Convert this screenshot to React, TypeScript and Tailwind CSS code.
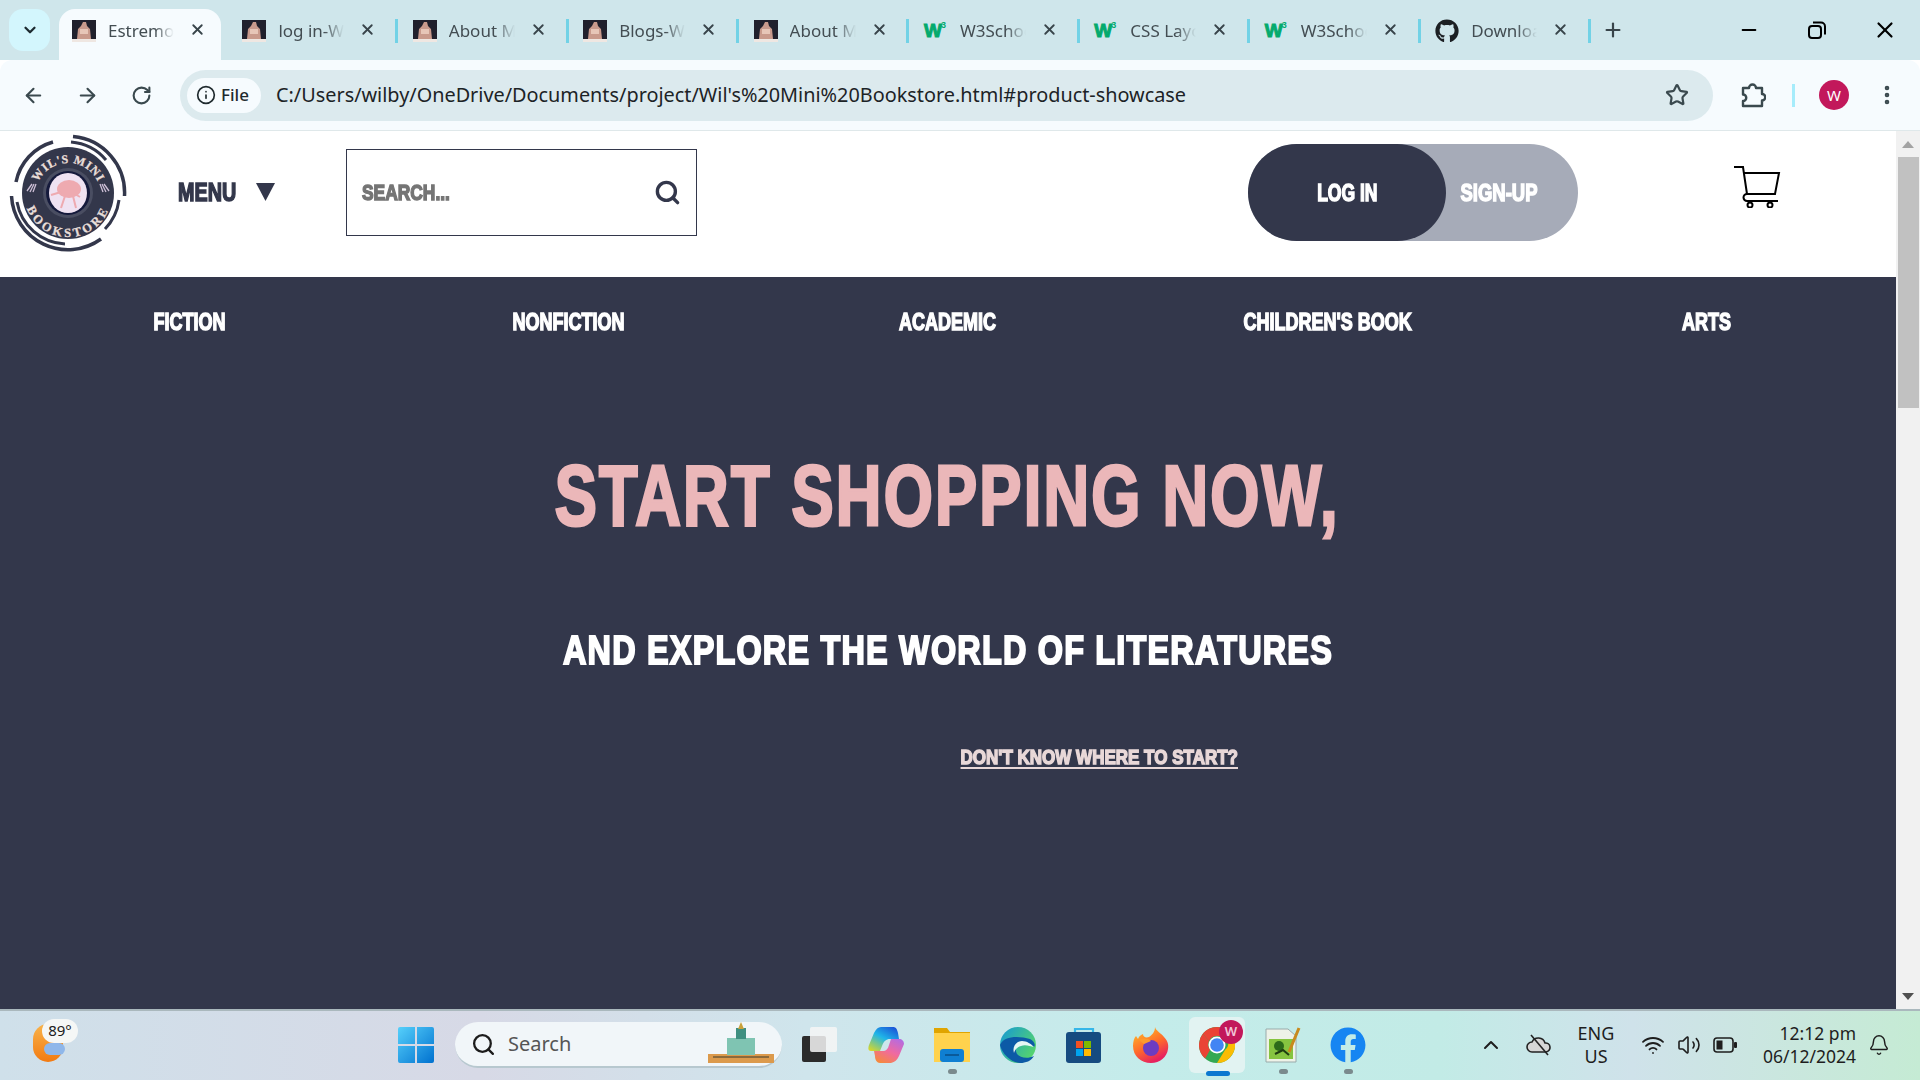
import React from "react";
import { ArrowLeft, ArrowRight, RotateCw, Info, Star, X, Plus, Minus, ChevronDown, ChevronUp, Search, Bell, Wifi, Volume2, EllipsisVertical } from "lucide-react";
import { FaGithub, FaFacebook } from "react-icons/fa";

const ui = "font-['Noto_Sans','Open_Sans',sans-serif]";
const base = "font-['Liberation_Sans',sans-serif] font-bold whitespace-nowrap";
const display = `${base} [-webkit-text-stroke:1.5px_currentColor]`;
const ink = "#33374b";

function Portrait() {
  return (
    <svg width="24" height="22" viewBox="0 0 24 22" className="shrink-0">
      <rect width="24" height="22" fill="#20202c" />
      <path d="M11 2 L14 2 L15 6 L18 9 L19 19 L5 19 L6 9 L9 6 Z" fill="#c99a8c" />
      <rect x="8" y="9" width="8" height="5" fill="#e7c6b8" />
      <rect y="19" width="24" height="3" fill="#efe7e2" />
    </svg>
  );
}

function W3() {
  return (
    <span className="flex w-[24px] shrink-0 items-start font-['Liberation_Sans',sans-serif] font-black text-[#04aa6d]">
      <span className="text-[19px] leading-[24px] [-webkit-text-stroke:1px_#04aa6d]">W</span>
      <span className="-ml-[1px] text-[9px] leading-[12px]">3</span>
    </span>
  );
}

const tabs: { title: string; icon: "p" | "w" | "g"; active?: boolean }[] = [
  { title: "Estremo", icon: "p", active: true },
  { title: "log in-Wil", icon: "p" },
  { title: "About Me", icon: "p" },
  { title: "Blogs-Wil", icon: "p" },
  { title: "About Me", icon: "p" },
  { title: "W3Schools", icon: "w" },
  { title: "CSS Layout", icon: "w" },
  { title: "W3Schools", icon: "w" },
  { title: "Download", icon: "g" },
];

function Tab({ title, icon, active }: { title: string; icon: string; active?: boolean }) {
  return (
    <div className={`flex h-[51px] w-[162.4px] shrink-0 items-center pb-[8px] pl-[13px] ${active ? "rounded-t-[16px] bg-[#f6fbfe]" : ""}`}>
      {icon === "p" && <Portrait />}
      {icon === "w" && <W3 />}
      {icon === "g" && <FaGithub className="shrink-0 text-[#1b1f23]" size={24} />}
      <span className={`ml-[12px] w-[66px] overflow-hidden whitespace-nowrap text-[17px] leading-[24px] text-[#434d52] ${ui} [mask-image:linear-gradient(90deg,#000_70%,transparent_100%)]`}>{title}</span>
      <X className="ml-[15px] -mt-[2px] shrink-0 text-[#38444a]" size={17} strokeWidth={2.6} />
    </div>
  );
}

function TabStrip() {
  return (
    <div className="flex h-[60px] shrink-0 items-end bg-[#cfe6eb] pl-[9px]">
      <div className="mb-[9px] flex h-[42px] w-[41px] shrink-0 items-center justify-center rounded-[14px] bg-[#d3f6fd]">
        <ChevronDown size={18} strokeWidth={3} className="text-[#1d2a30]" />
      </div>
      <div className="ml-[9px] flex items-end">
        {tabs.map((t, i) => (
          <React.Fragment key={i}>
            <Tab {...t} />
            <div className="flex h-[51px] w-[8px] shrink-0 items-start justify-center pt-[10px]">
              {i > 0 && <div className="ml-[2px] h-[24px] w-[3px] shrink-0 bg-[#72d2e6]" />}
            </div>
          </React.Fragment>
        ))}
      </div>
      <div className="ml-[2px] flex h-[51px] w-[36px] shrink-0 items-start justify-center pt-[10px]">
        <Plus size={22} strokeWidth={2.4} className="text-[#38444a]" />
      </div>
      <div className="ml-auto flex h-[60px] items-center pr-[22px]">
        <Minus size={22} strokeWidth={2} className="text-black" />
        <svg width="20" height="20" viewBox="0 0 20 20" fill="none" stroke="black" strokeWidth="2" className="ml-[47px]">
          <rect x="2" y="6" width="12" height="12" rx="3" />
          <path d="M6 2.5h8a4 4 0 0 1 4 4v8" />
        </svg>
        <X size={26} strokeWidth={2} className="ml-[45px] text-black" />
      </div>
    </div>
  );
}

function Toolbar() {
  return (
    <div className="flex h-[71px] shrink-0 items-center rounded-t-[12px] border-b border-[#dfe8ea] bg-[#f6fbfe] pl-[22px]">
      <ArrowLeft size={23} strokeWidth={2.2} className="text-[#3a494e]" />
      <ArrowRight size={23} strokeWidth={2.2} className="ml-[31px] text-[#3a494e]" />
      <RotateCw size={21} strokeWidth={2.4} className="ml-[32px] text-[#3a494e]" />
      <div className="ml-[28px] flex h-[51px] w-[1533px] items-center rounded-full bg-[#dceaee] pl-[7px]">
        <div className={`flex h-[35px] w-[74px] items-center justify-center gap-[5px] rounded-full bg-[#f6fbfe] pr-[3px] text-[17px] font-medium text-[#1f2a2e] ${ui}`}>
          <Info size={20} strokeWidth={2} />
          <span>File</span>
        </div>
        <span className={`ml-[15px] whitespace-nowrap text-[19.85px] text-[#1c2326] ${ui}`}>C:/Users/wilby/OneDrive/Documents/project/Wil's%20Mini%20Bookstore.html#product-showcase</span>
        <Star size={24} strokeWidth={2.2} className="ml-auto mr-[24px] text-[#3a494e]" />
      </div>
      <svg width="26" height="26" viewBox="0 0 26 26" fill="none" stroke="#3a494e" strokeWidth="2.4" className="ml-[27px]">
        <path d="M3 6h6a3.5 3.5 0 0 1 7 0h6v6a3.2 3.2 0 0 1 0 6.5V24H3v-5a3.2 3.2 0 0 0 0-6.5Z" strokeLinejoin="round" />
      </svg>
      <div className="ml-[26px] h-[23px] w-[3px] bg-[#a6ecfb]" />
      <div className={`ml-[24px] flex h-[30px] w-[30px] items-center justify-center rounded-full bg-[#c2185b] text-[15px] text-white ${ui}`}>W</div>
      <EllipsisVertical size={24} strokeWidth={2.6} className="ml-[26px] text-[#3a494e]" />
    </div>
  );
}

function Logo() {
  return (
    <svg width="118" height="118" viewBox="0 0 118 118" className="shrink-0">
      <defs>
        <path id="top" d="M 26 62 A 33 33 0 1 1 92 62" />
        <path id="bot" d="M 15 59 A 44 44 0 0 0 103 59" />
      </defs>
      <g fill="none" stroke={ink} strokeLinecap="butt">
        <path d="M 64 2.500 A 56.500 56.500 0 0 1 115.500 62" strokeWidth="3.500" />
        <path d="M 62 8 A 51 51 0 0 1 97 26" strokeWidth="3" />
        <path d="M 2.500 62 A 56.500 56.500 0 0 0 92 105" strokeWidth="3.500" />
        <path d="M 8 68 A 51 51 0 0 0 56 110" strokeWidth="3" />
        <path d="M 7 48 A 52 52 0 0 1 44 8" strokeWidth="3.500" />
        <path d="M 110 66 A 52 52 0 0 1 96 95" strokeWidth="3" />
      </g>
      <circle cx="59" cy="59" r="46" fill={ink} />
      <text fill="#e9ded8" fontFamily="'Liberation Serif',serif" fontWeight="700" fontSize="12" letterSpacing="0.800" stroke="#e9ded8" strokeWidth="0.300"><textPath href="#top" startOffset="50%" textAnchor="middle">WIL'S MINI</textPath></text>
      <text fill="#e9ded8" fontFamily="'Liberation Serif',serif" fontWeight="700" fontSize="12.500" letterSpacing="3" stroke="#e9ded8" strokeWidth="0.300"><textPath href="#bot" startOffset="50%" textAnchor="middle">BOOKSTORE</textPath></text>
      <g stroke="#cdbfd6" strokeWidth="1.300"><path d="M18 57l5-7M21 58l4-8M24 58l3-8M100 57l-5-7M97 58l-4-8M94 58l-3-8" /></g>
      <circle cx="59" cy="59" r="25" fill="#4a4e62" />
      <circle cx="59" cy="59" r="22" fill="#151a3c" />
      <ellipse cx="59" cy="59" rx="19" ry="20" fill="#efe2f2" />
      <ellipse cx="60" cy="55" rx="12" ry="9" fill="#eeaab0" />
      <path d="M52 58l-10 3M66 60l5 3M56 62l-4 12M64 62l3 12" stroke="#eeaab0" strokeWidth="2" fill="none" />
    </svg>
  );
}

function Cart() {
  return (
    <svg width="48" height="42" viewBox="0 0 48 42" fill="none" stroke="#000" strokeWidth="2" className="shrink-0">
      <path d="M1 1h9l4 27" />
      <path d="M10 7h36l-4 21H14" />
      <path d="M14 28a3 3 0 0 0 0 7h31" />
      <circle cx="17" cy="39" r="2.500" />
      <circle cx="37" cy="39" r="2.500" />
    </svg>
  );
}

function Header() {
  return (
    <div className="flex h-[146px] shrink-0 items-start bg-white pl-[9px]">
      <div className="pt-[3px]"><Logo /></div>
      <div className="ml-[51px] mt-[46px] flex items-center text-[#33374b]">
        <span className={`inline-block w-[58px] origin-left scale-x-[0.79] text-[25px] leading-[30px] ${display}`}>MENU</span>
        <svg width="19" height="18" viewBox="0 0 19 18" className="ml-[20px]"><path d="M0 0h19L9.500 18Z" fill={ink} /></svg>
      </div>
      <div className="ml-[71px] mt-[18px] flex h-[87px] w-[351px] items-center border border-[#33374b] px-[15px]">
        <span className={`inline-block w-[88px] origin-left scale-x-[0.79] text-[22px] leading-[28px] text-[#757575] ${display}`}>SEARCH...</span>
        <Search size={27} strokeWidth={3} className="ml-auto text-[#33374b]" />
      </div>
      <div className="ml-[551px] mt-[13px] flex h-[97px] w-[330px] rounded-[49px] bg-[#a6abb8]">
        <div className="flex w-[198px] items-center justify-center rounded-[49px] bg-[#33374b] pl-[1px] text-white">
          <span className={`inline-block scale-x-[0.73] text-[24px] ${display}`}>LOG IN</span>
        </div>
        <div className="flex w-[132px] items-center justify-center pr-[25px] text-white">
          <span className={`inline-block scale-x-[0.77] text-[24px] ${display}`}>SIGN-UP</span>
        </div>
      </div>
      <div className="ml-[155px] mt-[35px]"><Cart /></div>
    </div>
  );
}

function Hero() {
  return (
    <div className="flex flex-1 flex-col bg-[#33374b]">
      <div className="grid h-[90px] grid-cols-5 items-center text-center text-[24px] text-white">
        {["FICTION", "NONFICTION", "ACADEMIC", "CHILDREN'S BOOK", "ARTS"].map((t) => (
          <span key={t} className={`block scale-x-[0.75] ${display}`}>{t}</span>
        ))}
      </div>
      <h1 className={`mt-[79px] scale-x-[0.743] pr-[2px] text-center text-[85px] leading-[100px] tracking-[3px] text-[#ebb7b9] ${base} [-webkit-text-stroke:3px_#ebb7b9]`}>START SHOPPING NOW,</h1>
      <h2 className={`mt-[79px] scale-x-[0.791] text-center text-[41px] leading-[50px] tracking-[1.500px] text-white ${base} [-webkit-text-stroke:2px_#ffffff]`}>AND EXPLORE THE WORLD OF LITERATURES</h2>
      <div className="mt-[69px] flex justify-center pl-[303px]">
        <span className={`inline-block scale-x-[0.81] text-[21px] leading-[26px] text-[#e9d8d8] underline underline-offset-[3px] ${display}`}>DON'T KNOW WHERE TO START?</span>
      </div>
    </div>
  );
}

function Scrollbar() {
  return (
    <div className="flex w-[24px] shrink-0 flex-col items-center bg-[#f1f1f1]">
      <div className="flex h-[26px] items-center"><svg width="12" height="7" viewBox="0 0 12 7"><path d="M6 0l6 7H0Z" fill="#a3a3a3" /></svg></div>
      <div className="h-[251px] w-[21px] bg-[#c1c1c1]" />
      <div className="mt-auto flex h-[26px] items-center"><svg width="12" height="7" viewBox="0 0 12 7"><path d="M6 7l6-7H0Z" fill="#505050" /></svg></div>
    </div>
  );
}

function Weather() {
  return (
    <div className="relative h-[52px] w-[46px] shrink-0">
      <div className="absolute bottom-[9px] left-[0px] h-[38px] w-[30px] rounded-full bg-[linear-gradient(180deg,#f9b34a,#f27a12)]" />
      <div className="absolute bottom-[16px] left-[11px] h-[12px] w-[21px] rounded-full bg-[#8fb7ea]" />
      <div className={`absolute left-[9px] top-0 flex h-[24px] w-[36px] items-center justify-center rounded-full bg-[#f5f7f6] text-[15px] text-[#202020] ${ui}`}>89°</div>
    </div>
  );
}

function WinLogo() {
  return (
    <svg width="36" height="36" viewBox="0 0 36 36">
      <defs>
        <linearGradient id="wl" x1="0" y1="0" x2="1" y2="1"><stop offset="0" stopColor="#56d0fb" /><stop offset="1" stopColor="#0071cf" /></linearGradient>
      </defs>
      <path d="M0 2a2 2 0 0 1 2-2h15v17H0ZM19 0h15a2 2 0 0 1 2 2v15H19ZM0 19h17v17H2a2 2 0 0 1-2-2ZM19 19h17v15a2 2 0 0 1-2 2H19Z" fill="url(#wl)" />
    </svg>
  );
}

function TaskSearch() {
  return (
    <div className={`flex h-[46px] w-[327px] shrink-0 items-center rounded-full border-b-2 border-[#b7c8cf] bg-[#f1f6f9] pl-[16px] ${ui}`}>
      <Search size={25} strokeWidth={2.2} className="text-[#1c1c1c]" />
      <span className="ml-[12px] text-[20px] text-[#555]">Search</span>
      <svg width="72" height="44" viewBox="0 0 72 44" className="ml-auto mr-[5px]">
        <rect x="3" y="32" width="66" height="9" fill="#dc9a4c" />
        <rect x="22" y="16" width="28" height="17" fill="#7fc4b2" />
        <rect x="31" y="6" width="10" height="11" fill="#3f8f80" />
        <path d="M36 0l3 7h-6Z" fill="#c9a13b" />
        <rect x="8" y="34" width="56" height="2" fill="#8b6a3c" />
      </svg>
    </div>
  );
}

function TaskView() {
  return (
    <svg width="36" height="36" viewBox="0 0 36 36">
      <rect x="0" y="9" width="24" height="26" rx="2" fill="#2b2b2b" />
      <rect x="8" y="0" width="27" height="25" rx="2" fill="#f6f6f6" fillOpacity="0.85" />
    </svg>
  );
}
function Copilot() {
  return (
    <svg width="36" height="36" viewBox="0 0 36 36">
      <defs>
        <linearGradient id="c1" x1="0.8" y1="0" x2="0.1" y2="1"><stop offset="0" stopColor="#1c57d8" /><stop offset="0.45" stopColor="#1fb6e8" /><stop offset="1" stopColor="#d8d72a" /></linearGradient>
        <linearGradient id="c2" x1="0.8" y1="0" x2="0.2" y2="1"><stop offset="0" stopColor="#b56be0" /><stop offset="0.5" stopColor="#f06aa0" /><stop offset="1" stopColor="#f58a3a" /></linearGradient>
      </defs>
      <path d="M13 0h12c3 0 4 2 5 6l1 6H22c-4 0-6 2-8 7l-2 5H3c-3 0-3-3-2-6l5-12c2-4 4-6 7-6Z" fill="url(#c1)" />
      <path d="M23 12h8c3 0 5 2 5 5l-5 12c-2 4-4 6-8 7H12c-3 0-5-3-5-7l-1-5h9c3 0 5-2 6-6Z" fill="url(#c2)" />
    </svg>
  );
}
function Folder() {
  return (
    <svg width="36" height="36" viewBox="0 0 36 36">
      <path d="M0 1h13l3 4h20v30H0Z" fill="#e0a400" />
      <rect y="6" width="36" height="29" fill="#ffd24d" />
      <rect x="6" y="22" width="24" height="13" rx="3" fill="#0f7fd2" />
      <rect x="11" y="27" width="14" height="2" fill="#0a5a9a" />
    </svg>
  );
}
function Edge() {
  return (
    <svg width="36" height="36" viewBox="0 0 36 36">
      <defs>
        <linearGradient id="e1" x1="0" y1="0" x2="1" y2="0.6"><stop offset="0" stopColor="#1498d6" /><stop offset="1" stopColor="#54d36f" /></linearGradient>
      </defs>
      <circle cx="18" cy="18" r="18" fill="url(#e1)" />
      <path d="M0 18C2 27 12 36 20 36c6 0 11-2 14-7-6 3-14 2-17-2-3-5 0-10 4-11 5-1 9 1 13 4 2-2 0-6-4-8C20 9 4 8 0 18Z" fill="#0c5aa6" />
      <path d="M14 26c-2-6 2-12 8-12 5 0 9 3 12 6-4-1-9-3-13-1-4 1-6 4-7 7Z" fill="#e6f7f3" />
    </svg>
  );
}
function Store() {
  return (
    <svg width="36" height="36" viewBox="0 0 36 36">
      <path d="M9 6V2h18v4" fill="none" stroke="#36b6e8" strokeWidth="2.200" />
      <rect y="5" width="35" height="31" rx="3" fill="#164b80" />
      <rect x="10" y="14" width="7" height="7" fill="#f25022" />
      <rect x="18" y="14" width="7" height="7" fill="#7fba00" />
      <rect x="10" y="22" width="7" height="7" fill="#00a4ef" />
      <rect x="18" y="22" width="7" height="7" fill="#ffb900" />
    </svg>
  );
}
function Firefox() {
  return (
    <svg width="36" height="36" viewBox="0 0 36 36">
      <defs>
        <linearGradient id="f1" x1="0" y1="0" x2="0.5" y2="1"><stop offset="0" stopColor="#ffc928" /><stop offset="0.6" stopColor="#ff6a2b" /><stop offset="1" stopColor="#e6225f" /></linearGradient>
      </defs>
      <path d="M22 0c1 4 6 6 9 10 3 3 5 7 4 12-1 8-8 14-17 14C8 36 0 29 0 19c0-4 1-8 3-10l2 3c1-3 3-4 5-5 0 3 3 4 6 3 3-2 6-5 6-10Z" fill="url(#f1)" />
      <circle cx="18" cy="21" r="8" fill="#6d3cc0" />
      <path d="M6 13c4-2 9-2 12 1l-7 3Z" fill="#ff9a2b" />
    </svg>
  );
}
function Chrome() {
  return (
    <div className="relative flex h-[56px] w-[56px] shrink-0 items-center justify-center rounded-[6px] bg-[#e2f3f2]">
      <svg width="36" height="36" viewBox="0 0 36 36">
        <circle cx="18" cy="18" r="18" fill="#34a853" />
        <path d="M18 0a18 18 0 0 1 15.600 9H18a9 9 0 0 0-8 5L3.800 6.800A18 18 0 0 1 18 0Z" fill="#ea4335" />
        <path d="M3.800 6.800 10 14a9 9 0 0 0 1 9l-4.800 8.500A18 18 0 0 1 3.800 6.800Z" fill="#ea4335" />
        <path d="M33.600 9A18 18 0 0 1 18 36l8-13a9 9 0 0 0 0-14Z" fill="#fbbc04" />
        <circle cx="18" cy="18" r="8.500" fill="#fff" />
        <circle cx="18" cy="18" r="6.800" fill="#4285f4" />
      </svg>
      <div className={`absolute right-[2px] top-[3px] flex h-[24px] w-[24px] items-center justify-center rounded-full bg-[#c2185b] text-[13px] font-semibold text-[#f1c6d8] ${ui}`}>W</div>
    </div>
  );
}
function Notepad() {
  return (
    <svg width="36" height="38" viewBox="0 0 36 38">
      <path d="M1 3h22l8 7v26H1Z" fill="#eef2e8" stroke="#9aa" strokeWidth="1" />
      <rect x="4" y="13" width="24" height="20" fill="#86c440" />
      <circle cx="14" cy="20" r="5" fill="#2c6a1a" />
      <path d="M10 28l8-4 6 5" stroke="#1f3d10" strokeWidth="2" fill="none" />
      <path d="M24 26 L34 2" stroke="#c88a1d" strokeWidth="3" />
    </svg>
  );
}

function Tray() {
  return (
    <div className={`ml-auto flex items-center pr-[30px] text-[#1e1e1e] ${ui}`}>
      <ChevronUp size={24} strokeWidth={2} />
      <svg width="26" height="22" viewBox="0 0 26 22" fill="none" stroke="#222" strokeWidth="1.600" className="ml-[23px]">
        <path d="M6 18a5 5 0 0 1 0-10 7 7 0 0 1 13 1 4.500 4.500 0 0 1 1 9Z" fill="#d6d6d6" />
        <path d="M5 1l17 20" />
      </svg>
      <div className="ml-[12px] flex w-[64px] flex-col items-center text-[18px] leading-[23px]"><span>ENG</span><span>US</span></div>
      <Wifi size={24} strokeWidth={1.800} className="ml-[13px]" />
      <Volume2 size={24} strokeWidth={1.600} className="ml-[12px]" />
      <svg width="24" height="16" viewBox="0 0 24 16" fill="none" className="ml-[12px]">
        <rect x="1" y="1" width="19" height="14" rx="3" stroke="#1e1e1e" strokeWidth="1.600" />
        <rect x="3.500" y="3.500" width="6" height="9" fill="#1e1e1e" />
        <rect x="21" y="5" width="3" height="6" rx="1" fill="#1e1e1e" />
      </svg>
      <div className="ml-[14px] flex w-[105px] flex-col items-end text-[17.500px] leading-[23px]"><span>12:12 pm</span><span>06/12/2024</span></div>
      <Bell size={22} strokeWidth={1.600} className="ml-[12px]" />
    </div>
  );
}

function Dot({ color = "#7a8a8d", w = "w-[9px]" }: { color?: string; w?: string }) {
  return <div className={`h-[5px] ${w} rounded-full`} style={{ background: color }} />;
}

function Slot({ children, dot, className = "" }: { children: React.ReactNode; dot?: boolean; className?: string }) {
  return (
    <div className={`relative flex h-[36px] w-[36px] shrink-0 items-center justify-center ${className}`}>
      {children}
      {dot && <div className="absolute -bottom-[11px] left-[14px]"><Dot /></div>}
    </div>
  );
}

function Taskbar() {
  return (
    <div className="flex h-[71px] shrink-0 items-center border-t-2 border-[#aab8bd] bg-[linear-gradient(90deg,#cfe0ea_0%,#d7d9e6_25%,#cfe5ec_42%,#c4ecea_60%,#c2ebe6_75%,#cfe2ea_85%,#c5ebd4_100%)] pb-[2px] pl-[33px]">
      <Weather />
      <div className="ml-[319px]"><Slot><WinLogo /></Slot></div>
      <div className="ml-[21px] pt-[1px]"><TaskSearch /></div>
      <Slot className="ml-[20px]"><TaskView /></Slot>
      <Slot className="ml-[30px]"><Copilot /></Slot>
      <Slot className="ml-[30px]" dot><Folder /></Slot>
      <Slot className="ml-[30px]"><Edge /></Slot>
      <Slot className="ml-[30px]"><Store /></Slot>
      <Slot className="ml-[31px]"><Firefox /></Slot>
      <div className="relative ml-[20px]">
        <Chrome />
        <div className="absolute -bottom-[3px] left-[17px]"><Dot color="#0b78d0" w="w-[24px]" /></div>
      </div>
      <Slot className="ml-[20px]" dot><Notepad /></Slot>
      <Slot className="ml-[29px]" dot><FaFacebook size={36} className="text-[#1685f2]" /></Slot>
      <Tray />
    </div>
  );
}

export default function App() {
  return (
    <div className="flex h-[1080px] w-[1920px] flex-col overflow-hidden">
      <TabStrip />
      <Toolbar />
      <div className="flex min-h-0 flex-1">
        <div className="flex min-w-0 flex-1 flex-col">
          <Header />
          <Hero />
        </div>
        <Scrollbar />
      </div>
      <Taskbar />
    </div>
  );
}
